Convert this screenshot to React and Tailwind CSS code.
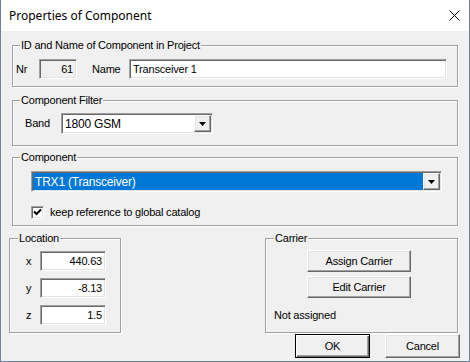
import React from 'react';

const SUNKEN = 'border border-t-[#a0a0a0] border-l-[#a0a0a0] border-b-white border-r-white shadow-[inset_1px_1px_0_#696969,inset_-1px_-1px_0_#e3e3e3] p-[1px]';
const RAISED = 'border border-t-white border-l-white border-b-[#696969] border-r-[#696969] shadow-[inset_-1px_-1px_0_#a0a0a0,inset_1px_1px_0_#e3e3e3] bg-[#f0f0f0]';
const GROUP = 'relative border border-[#a0a0a0] shadow-[1px_1px_0_#fff,inset_1px_1px_0_#fff]';

const Legend = ({ children, left = 'left-[7px]' }) => (
    <span className={`absolute -top-[8px] ${left} bg-[#f0f0f0] px-[1px] leading-[14px]`}>{children}</span>
);

const Arrow = () => (
    <svg width="7" height="4" viewBox="0 0 7 4">
        <polygon points="0,0 7,0 3.5,4" fill="#000" />
    </svg>
);

const DropButton = () => (
    <div className={`${RAISED} w-[17px] h-full flex items-center justify-center`}>
        <Arrow />
    </div>
);

const Field = ({ value, width, align = 'text-right', disabled }) => (
    <div className={`${SUNKEN} ${width} h-[20px] ${disabled ? 'bg-[#f0f0f0]' : 'bg-white'} flex items-center`}>
        <span className={`flex-1 ${align} px-[2px] leading-[14px]`}>{value}</span>
    </div>
);

const Button = ({ children, className = '', isDefault }) => (
    <div
        className={
            isDefault
                ? `border border-black shadow-[inset_1px_1px_0_#fff,inset_-1px_-1px_0_#696969,inset_-2px_-2px_0_#a0a0a0] bg-[#f0f0f0] flex items-center justify-center ${className}`
                : `${RAISED} flex items-center justify-center ${className}`
        }
    >
        {children}
    </div>
);

export default function App() {
    return (
        <div className="w-[470px] h-[362px] flex flex-col border-x border-b border-[#71829e] text-[11px] tracking-[-0.2px] text-black" style={{ fontFamily: '"Liberation Sans", Arial, sans-serif' }}>
            {/* title bar */}
            <div className="h-[31px] bg-white flex items-center justify-between pl-[8px] pr-[9px] shrink-0">
                <span className="text-[12px] tracking-normal" style={{ fontFamily: '"Noto Sans", sans-serif' }}>Properties of Component</span>
                <svg width="11" height="11" viewBox="0 0 11 11">
                    <path d="M0.5 0.5 L10.5 10.5 M10.5 0.5 L0.5 10.5" stroke="#000" strokeWidth="1" />
                </svg>
            </div>

            <div className="flex-1 bg-[#f0f0f0] pt-[14px] flex flex-col">
                {/* ID and Name */}
                <div className={`${GROUP} ml-[11px] w-[446px] h-[42px] pt-[13px] pl-[3px]`}>
                    <Legend>ID and Name of Component in Project</Legend>
                    <div className="flex items-center h-[20px]">
                        <span className="w-[23px]">Nr</span>
                        <Field value="61" width="w-[38px]" disabled />
                        <span className="w-[37px] ml-[15px]">Name</span>
                        <Field value="Transceiver 1" width="w-[318px]" align="text-left" />
                    </div>
                </div>

                {/* Component Filter */}
                <div className={`${GROUP} ml-[11px] mt-[13px] w-[446px] h-[46px] pt-[12px] pl-[12px]`}>
                    <Legend>Component Filter</Legend>
                    <div className="flex items-center h-[21px]">
                        <span className="w-[36px]">Band</span>
                        <div className={`${SUNKEN} w-[152px] h-[21px] bg-white flex`}>
                            <span className="flex-1 pl-[2px] self-center text-[12px] leading-[14px]">1800 GSM</span>
                            <DropButton />
                        </div>
                    </div>
                </div>

                {/* Component */}
                <div className={`${GROUP} ml-[11px] mt-[11px] w-[446px] h-[69px] pt-[13px] pl-[18px]`}>
                    <Legend>Component</Legend>
                    <div className={`${SUNKEN} w-[411px] h-[21px] bg-white flex`}>
                        <span className="flex-1 bg-[#0078d7] text-white pl-[2px] flex items-center text-[12px]">TRX1 (Transceiver)</span>
                        <DropButton />
                    </div>
                    <div className="flex items-center mt-[12px]">
                        <div className={`${SUNKEN} w-[13px] h-[13px] bg-white p-0 flex items-center justify-center`}>
                            <svg width="9" height="9" viewBox="0 0 9 9">
                                <path d="M1 3.5 L3.5 6 L8 1.5" stroke="#000" strokeWidth="2" fill="none" />
                            </svg>
                        </div>
                        <span className="ml-[6px]">keep reference to global catalog</span>
                    </div>
                </div>

                {/* Location + Carrier */}
                <div className="flex mt-[12px]">
                    <div className={`${GROUP} ml-[8px] w-[112px] h-[95px] pt-[12px] pl-[16px]`}>
                        <Legend left="left-[8px]">Location</Legend>
                        <div className="flex flex-col gap-[7px]">
                            {[['x', '440.63'], ['y', '-8.13'], ['z', '1.5']].map(([k, v]) => (
                                <div key={k} className="flex items-center">
                                    <span className="w-[14px]">{k}</span>
                                    <Field value={v} width="w-[66px]" />
                                </div>
                            ))}
                        </div>
                    </div>

                    <div className={`${GROUP} ml-[144px] w-[193px] h-[95px] pt-[11px] pl-[8px]`}>
                        <Legend left="left-[8px]">Carrier</Legend>
                        <div className="flex flex-col gap-[4px] ml-[33px]">
                            <Button className="w-[104px] h-[22px]">Assign Carrier</Button>
                            <Button className="w-[104px] h-[22px]">Edit Carrier</Button>
                        </div>
                        <div className="mt-[9px]">Not assigned</div>
                    </div>
                </div>

                <div className="flex justify-end gap-[15px] pr-[9px] mt-[1px]">
                    <Button isDefault className="w-[75px] h-[24px]">OK</Button>
                    <Button className="w-[75px] h-[24px]">Cancel</Button>
                </div>
            </div>
        </div>
    );
}
